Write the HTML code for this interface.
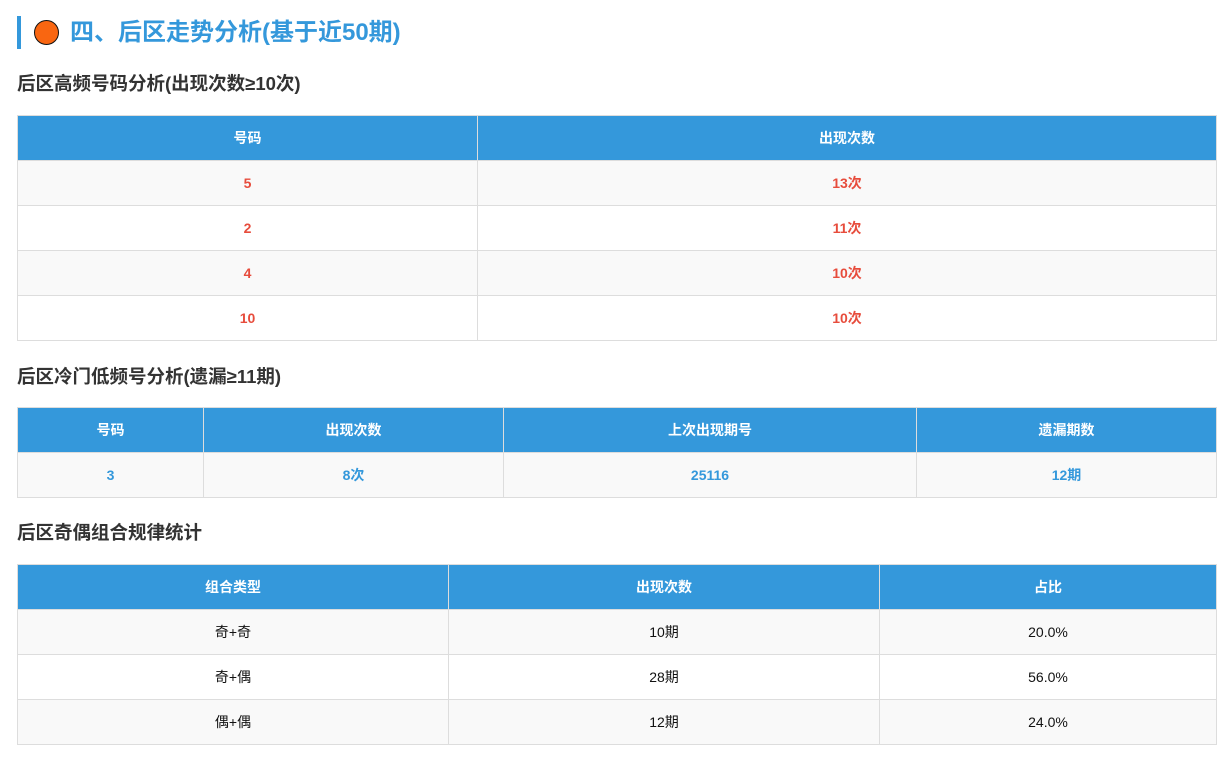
<!DOCTYPE html>
<html><head><meta charset="utf-8"><style>
body{margin:0;background:#fff;font-family:"Liberation Sans","Noto Sans CJK SC",sans-serif;color:#333;}
.wrap{position:relative;width:1222px;height:757px;}
h2{position:absolute;left:17px;top:16px;margin:0;height:33px;border-left:4px solid #3498db;padding-left:13px;font-size:24px;line-height:33px;color:#3498db;font-weight:bold;display:flex;align-items:center;}
.dot{width:25px;height:25px;border-radius:50%;background:#f96611;border:1.5px solid #111;box-sizing:border-box;margin-right:11px;}
h3{position:absolute;left:17px;margin:0;font-size:18.5px;font-weight:bold;color:#333;line-height:24px;}
table{position:absolute;left:17px;width:1200px;border-collapse:collapse;font-size:14px;table-layout:fixed;}
th{background:#3498db;color:#fff;height:44px;border:1px solid #ddd;font-weight:bold;padding:0;}
td{height:44px;border:1px solid #ddd;text-align:center;padding:0;}
tbody tr:nth-child(odd) td{background:#f9f9f9;}
.r td{color:#e74c3c;font-weight:bold;}
.b td{color:#3498db;font-weight:bold;}
.n td{color:#111;}
</style></head><body><div class="wrap">
<h2><span class="dot"></span>四、后区走势分析(基于近50期)</h2>
<h3 style="top:72px">后区高频号码分析(出现次数≥10次)</h3>
<table class="r" style="top:115px"><thead>
<tr><th style="width:459px">号码</th><th>出现次数</th></tr></thead><tbody>
<tr><td>5</td><td>13次</td></tr>
<tr><td>2</td><td>11次</td></tr>
<tr><td>4</td><td>10次</td></tr>
<tr><td>10</td><td>10次</td></tr>
</tbody></table>
<h3 style="top:365px">后区冷门低频号分析(遗漏≥11期)</h3>
<table class="b" style="top:407px"><thead>
<tr><th style="width:185px">号码</th><th style="width:299px">出现次数</th><th style="width:412px">上次出现期号</th><th>遗漏期数</th></tr></thead><tbody>
<tr><td>3</td><td>8次</td><td>25116</td><td>12期</td></tr>
</tbody></table>
<h3 style="top:521px">后区奇偶组合规律统计</h3>
<table class="n" style="top:564px"><thead>
<tr><th style="width:430px">组合类型</th><th style="width:430px">出现次数</th><th>占比</th></tr></thead><tbody>
<tr><td>奇+奇</td><td>10期</td><td>20.0%</td></tr>
<tr><td>奇+偶</td><td>28期</td><td>56.0%</td></tr>
<tr><td>偶+偶</td><td>12期</td><td>24.0%</td></tr>
</tbody></table>
</div></body></html>
